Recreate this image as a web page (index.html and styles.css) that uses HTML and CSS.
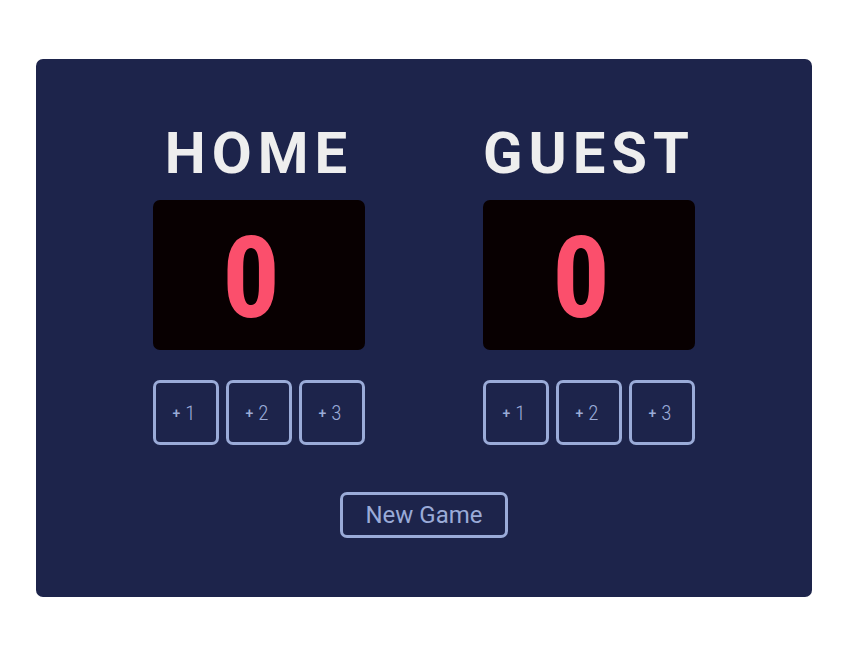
FILE: index.html
```html
<!DOCTYPE html>
<html lang="en">
<head>
<meta charset="utf-8">
<meta name="viewport" content="width=device-width, initial-scale=1">
<title>Scoreboard</title>
<link rel="stylesheet" href="styles.css">
</head>
<body>
<main class="board">
  <div class="teams">
    <section class="team">
      <h1 class="team-name">HOME</h1>
      <output class="score">0</output>
      <div class="points">
        <button class="point" type="button"><span class="plus">+</span><span>1</span></button>
        <button class="point" type="button"><span class="plus">+</span><span>2</span></button>
        <button class="point" type="button"><span class="plus">+</span><span>3</span></button>
      </div>
    </section>
    <section class="team">
      <h1 class="team-name">GUEST</h1>
      <output class="score">0</output>
      <div class="points">
        <button class="point" type="button"><span class="plus">+</span><span>1</span></button>
        <button class="point" type="button"><span class="plus">+</span><span>2</span></button>
        <button class="point" type="button"><span class="plus">+</span><span>3</span></button>
      </div>
    </section>
  </div>
  <button class="new-game" type="button">New Game</button>
</main>
</body>
</html>
```
FILE: styles.css
```css
* {
  box-sizing: border-box;
}

body {
  margin: 0;
  min-height: 100vh;
  padding: 36px;
  display: flex;
  align-items: center;
  background: #ffffff;
  font-family: Roboto, "Liberation Sans", sans-serif;
}

.board {
  flex: 1;
  padding: 60px 24px 59px;
  display: flex;
  flex-direction: column;
  align-items: center;
  gap: 47px;
  border-radius: 7px;
  background: #1d244b;
}

.teams {
  display: flex;
  justify-content: center;
  gap: 118px;
}

.team {
  display: flex;
  flex-direction: column;
}

.team-name {
  margin: 0 0 13px;
  font-size: 58px;
  line-height: 68px;
  font-weight: 700;
  letter-spacing: 6px;
  text-align: center;
  color: #eeeeee;
}

.score {
  padding: 20px 16px 14px 0;
  border-radius: 7px;
  background: #080001;
  color: #fb4f6c;
  font-family: "Roboto Condensed", Roboto, sans-serif;
  font-size: 114px;
  font-weight: 700;
  line-height: 116px;
  text-align: center;
}

.points {
  margin-top: 30px;
  display: flex;
  gap: 7px;
}

.point,
.new-game {
  border: 3px solid #9aabd8;
  border-radius: 7px;
  background: transparent;
  color: #9aabd8;
  cursor: pointer;
}

.point {
  width: 66px;
  height: 65px;
  padding: 0 4px 0 0;
  display: flex;
  align-items: center;
  justify-content: center;
  gap: 5px;
  font-family: "Roboto Condensed", Roboto, sans-serif;
  font-size: 21px;
  font-weight: 300;
}

.plus {
  font-family: Roboto, sans-serif;
  font-size: 14px;
  font-weight: 500;
}

.new-game {
  padding: 6px 22px;
  font-family: inherit;
  font-size: 24px;
  line-height: 28px;
}
```
